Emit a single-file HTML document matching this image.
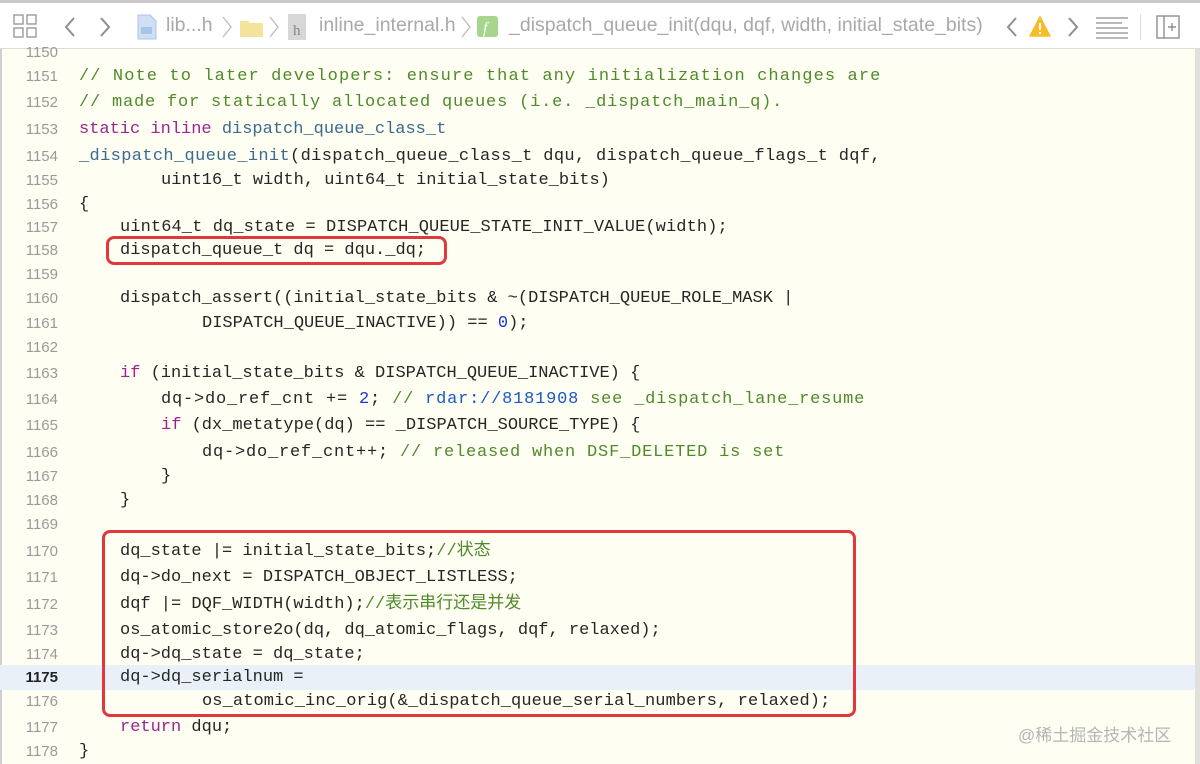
<!DOCTYPE html>
<html><head><meta charset="utf-8"><style>
*{margin:0;padding:0;box-sizing:border-box}
body{width:1200px;height:764px;overflow:hidden;background:#fffef3;position:relative;font-family:"Liberation Mono",monospace}
#hdr{position:absolute;left:0;top:0;width:1200px;height:49px;background:#fff;border-top:3px solid #c9c9c9;border-bottom:1px solid #dcdcdc;font-family:"Liberation Sans",sans-serif;color:#a9a9a9;font-size:19.5px}
#hdr .t{position:absolute;top:11px;white-space:nowrap}
.row{position:absolute;left:0;width:1195px;height:25px;line-height:25px;white-space:pre;font-size:17px;color:#262626}
.ln{position:absolute;left:0;width:58px;text-align:right;font-family:"Liberation Sans",sans-serif;font-size:15px;color:#9a9a9a}
.cd{position:absolute;left:79px}
.c{color:#4f8a2b;letter-spacing:.6px}
.k{color:#9b2393}
.ty{color:#3a6a8e}
.n{color:#1c38cf}
.u{color:#1a57c8}
.box{position:absolute;border:3px solid #e0383c;border-radius:8px}
</style></head><body>
<div id="hdr">
<svg style="position:absolute;left:12px;top:10px" width="26" height="26" viewBox="0 0 26 26" fill="none" stroke="#999" stroke-width="1.4"><rect x="2" y="2" width="9" height="9"/><rect x="15" y="2" width="9" height="9"/><rect x="2" y="15" width="9" height="9"/><rect x="15" y="15" width="9" height="9"/></svg>
<svg style="position:absolute;left:60px;top:12px" width="60" height="24" fill="none" stroke="#8e8e8e" stroke-width="2"><path d="M14 3 L6 12 L14 21"/><path d="M41 3 L49 12 L41 21"/></svg>
<svg style="position:absolute;left:137px;top:11px" width="20" height="26"><path d="M1 1h12l6 6v18H1z" fill="#cfe0f5" stroke="#a8c4e6"/><rect x="4" y="13" width="11" height="7" fill="#a8c4e6"/></svg>
<div class="t" style="left:166px">lib...h</div>
<svg style="position:absolute;left:220px;top:12px" width="14" height="24" fill="none" stroke="#bbb" stroke-width="1.3"><path d="M3 2 L11 12 L3 22"/></svg>
<svg style="position:absolute;left:239px;top:15px" width="25" height="20"><path d="M1 3h8l2 2h13v14H1z" fill="#f4e39a"/></svg>
<svg style="position:absolute;left:267px;top:12px" width="14" height="24" fill="none" stroke="#bbb" stroke-width="1.3"><path d="M3 2 L11 12 L3 22"/></svg>
<svg style="position:absolute;left:288px;top:11px" width="18" height="26"><rect x="0" y="0" width="18" height="26" fill="#d7d7d7"/><text x="5" y="21" font-family="Liberation Serif" font-size="15" fill="#888">h</text></svg>
<div class="t" style="left:319px">inline_internal.h</div>
<svg style="position:absolute;left:459px;top:12px" width="14" height="24" fill="none" stroke="#bbb" stroke-width="1.3"><path d="M3 2 L11 12 L3 22"/></svg>
<svg style="position:absolute;left:477px;top:13px" width="21" height="21"><rect width="21" height="21" rx="3" fill="#a6d68e"/><text x="6" y="17" font-family="Liberation Serif" font-style="italic" font-size="16" fill="#fff">f</text></svg>
<div class="t" style="left:509px">_dispatch_queue_init(dqu, dqf, width, initial_state_bits)</div>
<svg style="position:absolute;left:1002px;top:12px" width="80" height="24" fill="none" stroke="#8e8e8e" stroke-width="2"><path d="M14 3 L6 12 L14 21"/><path d="M67 3 L75 12 L67 21"/></svg>
<svg style="position:absolute;left:1029px;top:13px" width="22" height="21"><path d="M11 1 L21 20 H1z" fill="#f6bd2b" stroke="#f6bd2b" stroke-linejoin="round" stroke-width="1.5"/><rect x="10" y="7" width="2" height="7" fill="#fff"/><rect x="10" y="16" width="2" height="2" fill="#fff"/></svg>
<svg style="position:absolute;left:1095px;top:14px" width="34" height="22" stroke="#8e8e8e" stroke-width="1.3"><path d="M1 1h32M1 6h26M1 11h32M1 16h32M1 21h32"/></svg>
<div style="position:absolute;left:1140px;top:11px;width:1px;height:26px;background:#ddd"></div>
<svg style="position:absolute;left:1156px;top:12px" width="24" height="24" fill="none" stroke="#8e8e8e" stroke-width="1.4"><rect x="1" y="1" width="22" height="22"/><path d="M8 1v22M12 12h8M16 8v8"/></svg>
</div>
<div style="position:absolute;left:0;top:49px;width:2px;height:715px;background:#cfcfcf"></div>
<div style="position:absolute;left:1195px;top:49px;width:5px;height:715px;background:#e0e0dc"></div>
<div style="position:absolute;left:0;top:665px;width:1195px;height:25px;background:#e9f0f7"></div>
<div id="code">
<div class="row" style="top:40px"><span class="ln">1150</span></div>
<div class="row" style="top:64px"><span class="ln">1151</span><span class="cd c" style="letter-spacing:1.1px">// Note to later developers: ensure that any initialization changes are</span></div>
<div class="row" style="top:90px"><span class="ln">1152</span><span class="cd c" style="letter-spacing:.8px">// made for statically allocated queues (i.e. _dispatch_main_q).</span></div>
<div class="row" style="top:117px"><span class="ln">1153</span><span class="cd"><span class="k">static inline</span> <span class="ty">dispatch_queue_class_t</span></span></div>
<div class="row" style="top:144px"><span class="ln">1154</span><span class="cd" style="letter-spacing:.35px"><span class="ty">_dispatch_queue_init</span>(dispatch_queue_class_t dqu, dispatch_queue_flags_t dqf,</span></div>
<div class="row" style="top:168px"><span class="ln">1155</span><span class="cd" style="left:161px">uint16_t width, uint64_t initial_state_bits)</span></div>
<div class="row" style="top:192px"><span class="ln">1156</span><span class="cd">{</span></div>
<div class="row" style="top:215px"><span class="ln">1157</span><span class="cd" style="left:120px;letter-spacing:.1px">uint64_t dq_state = DISPATCH_QUEUE_STATE_INIT_VALUE(width);</span></div>
<div class="row" style="top:238px"><span class="ln">1158</span><span class="cd" style="left:120px">dispatch_queue_t dq = dqu._dq;</span></div>
<div class="row" style="top:262px"><span class="ln">1159</span></div>
<div class="row" style="top:286px"><span class="ln">1160</span><span class="cd" style="left:120px">dispatch_assert((initial_state_bits &amp; ~(DISPATCH_QUEUE_ROLE_MASK |</span></div>
<div class="row" style="top:311px"><span class="ln">1161</span><span class="cd" style="left:202px">DISPATCH_QUEUE_INACTIVE)) == <span class="n">0</span>);</span></div>
<div class="row" style="top:335px"><span class="ln">1162</span></div>
<div class="row" style="top:361px"><span class="ln">1163</span><span class="cd" style="left:120px"><span class="k">if</span> (initial_state_bits &amp; DISPATCH_QUEUE_INACTIVE) {</span></div>
<div class="row" style="top:387px"><span class="ln">1164</span><span class="cd" style="left:161px;letter-spacing:.8px">dq-&gt;do_ref_cnt += <span class="n">2</span>; <span class="c" style="letter-spacing:.8px">// </span><span class="u">rdar://8181908</span><span class="c" style="letter-spacing:.8px"> see _dispatch_lane_resume</span></span></div>
<div class="row" style="top:413px"><span class="ln">1165</span><span class="cd" style="left:161px"><span class="k">if</span> (dx_metatype(dq) == _DISPATCH_SOURCE_TYPE) {</span></div>
<div class="row" style="top:440px"><span class="ln">1166</span><span class="cd" style="left:202px;letter-spacing:.8px">dq-&gt;do_ref_cnt++; <span class="c" style="letter-spacing:.8px">// released when DSF_DELETED is set</span></span></div>
<div class="row" style="top:464px"><span class="ln">1167</span><span class="cd" style="left:161px">}</span></div>
<div class="row" style="top:488px"><span class="ln">1168</span><span class="cd" style="left:120px">}</span></div>
<div class="row" style="top:512px"><span class="ln">1169</span></div>
<div class="row" style="top:539px"><span class="ln">1170</span><span class="cd" style="left:120px">dq_state |= initial_state_bits;<span class="c" style="font-family:'Liberation Mono','Noto Sans CJK SC',monospace;letter-spacing:0">//状态</span></span></div>
<div class="row" style="top:565px"><span class="ln">1171</span><span class="cd" style="left:120px">dq-&gt;do_next = DISPATCH_OBJECT_LISTLESS;</span></div>
<div class="row" style="top:592px"><span class="ln">1172</span><span class="cd" style="left:120px">dqf |= DQF_WIDTH(width);<span class="c" style="font-family:'Liberation Mono','Noto Sans CJK SC',monospace;letter-spacing:0">//表示串行还是并发</span></span></div>
<div class="row" style="top:618px"><span class="ln">1173</span><span class="cd" style="left:120px">os_atomic_store2o(dq, dq_atomic_flags, dqf, relaxed);</span></div>
<div class="row" style="top:642px"><span class="ln">1174</span><span class="cd" style="left:120px">dq-&gt;dq_state = dq_state;</span></div>
<div class="row" style="top:665px"><span class="ln" style="color:#222;font-weight:bold">1175</span><span class="cd" style="left:120px">dq-&gt;dq_serialnum =</span></div>
<div class="row" style="top:689px"><span class="ln">1176</span><span class="cd" style="left:202px;letter-spacing:.1px">os_atomic_inc_orig(&amp;_dispatch_queue_serial_numbers, relaxed);</span></div>
<div class="row" style="top:715px"><span class="ln">1177</span><span class="cd" style="left:120px"><span class="k">return</span> dqu;</span></div>
<div class="row" style="top:739px"><span class="ln">1178</span><span class="cd">}</span></div>
</div>
<div class="box" style="left:106px;top:236px;width:341px;height:29px"></div>
<div class="box" style="left:102px;top:530px;width:754px;height:187px"></div>
<div style="position:absolute;left:1018px;top:721px;font-family:'Liberation Sans','Noto Sans CJK SC',sans-serif;font-size:17px;color:#b5b5b5">@稀土掘金技术社区</div>
</body></html>
